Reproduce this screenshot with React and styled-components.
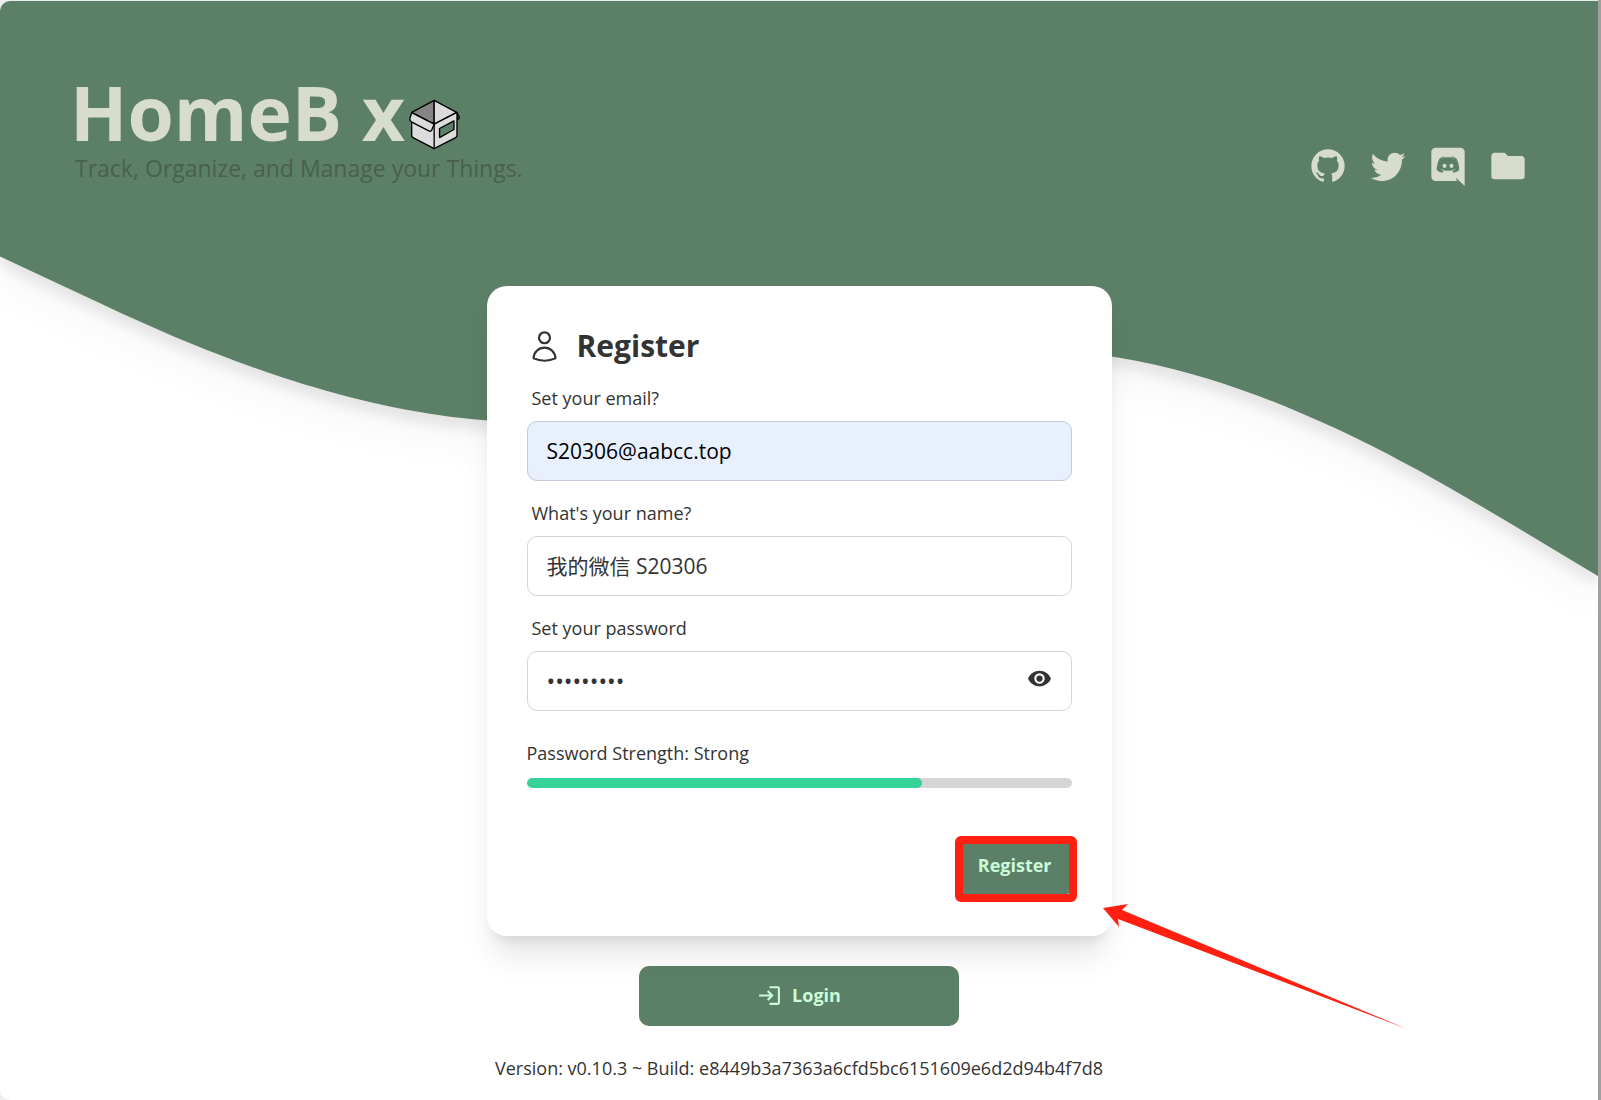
import React, { useState } from "react"
import styled, { createGlobalStyle, ThemeProvider } from "styled-components"

const theme = {
  colors: {
    primary: "#5c7f67",
    primaryContent: "#c9fbd9",
    banner: "#d8dccd",
    tagline: "#495f51",
    text: "#333333",
    border: "#d5d5d5",
    autofill: "#e8f0fe",
    success: "#36d399",
    alert: "#ff2011",
  },
}

const GlobalStyle = createGlobalStyle`
  * {
    box-sizing: border-box;
  }
  body {
    margin: 0;
    background-color: #eceeed;
    color: ${theme.colors.text};
    font-family: "Open Sans", "Noto Sans CJK SC", sans-serif;
    font-size: 18px;
    line-height: 24px;
  }
  h1, h2, p {
    margin: 0;
  }
`

const icons = {
  github:
    "M12,2A10,10 0 0,0 2,12C2,16.42 4.87,20.17 8.84,21.5C9.34,21.58 9.5,21.27 9.5,21C9.5,20.77 9.5,20.14 9.5,19.31C6.73,19.91 6.14,17.97 6.14,17.97C5.68,16.81 5.03,16.5 5.03,16.5C4.12,15.88 5.1,15.9 5.1,15.9C6.1,15.97 6.63,16.93 6.63,16.93C7.5,18.45 8.97,18 9.54,17.76C9.63,17.11 9.89,16.67 10.17,16.42C7.95,16.17 5.62,15.31 5.62,11.5C5.62,10.39 6,9.5 6.65,8.79C6.55,8.54 6.2,7.5 6.75,6.15C6.75,6.15 7.59,5.88 9.5,7.17C10.29,6.95 11.15,6.84 12,6.84C12.85,6.84 13.71,6.95 14.5,7.17C16.41,5.88 17.25,6.15 17.25,6.15C17.8,7.5 17.45,8.54 17.35,8.79C18,9.5 18.38,10.39 18.38,11.5C18.38,15.32 16.04,16.16 13.81,16.41C14.17,16.72 14.5,17.33 14.5,18.26C14.5,19.6 14.5,20.68 14.5,21C14.5,21.27 14.66,21.59 15.17,21.5C19.14,20.16 22,16.42 22,12A10,10 0 0,0 12,2Z",
  twitter:
    "M22.46,6C21.69,6.35 20.86,6.58 20,6.69C20.88,6.16 21.56,5.32 21.88,4.31C21.05,4.81 20.13,5.16 19.16,5.36C18.37,4.5 17.26,4 16,4C13.65,4 11.73,5.92 11.73,8.29C11.73,8.63 11.77,8.96 11.84,9.27C8.28,9.09 5.11,7.38 3,4.79C2.63,5.42 2.42,6.16 2.42,6.94C2.42,8.43 3.17,9.75 4.33,10.5C3.62,10.5 2.96,10.3 2.38,10C2.38,10 2.38,10 2.38,10.03C2.38,12.11 3.86,13.85 5.82,14.24C5.46,14.34 5.08,14.39 4.69,14.39C4.42,14.39 4.15,14.36 3.89,14.31C4.43,16 6,17.26 7.89,17.29C6.43,18.45 4.58,19.13 2.56,19.13C2.22,19.13 1.88,19.11 1.54,19.07C3.44,20.29 5.7,21 8.12,21C16,21 20.33,14.46 20.33,8.79C20.33,8.6 20.33,8.42 20.32,8.23C21.16,7.63 21.88,6.87 22.46,6Z",
  discord:
    "M22 24L16.75 19L17.38 21H4.5A2.5 2.5 0 0 1 2 18.5V3.5A2.5 2.5 0 0 1 4.5 1H19.5A2.5 2.5 0 0 1 22 3.5V24M12 6.8C9.32 6.8 7.44 7.95 7.44 7.95C8.47 7.03 10.27 6.5 10.27 6.5L10.1 6.33C8.41 6.36 6.88 7.53 6.88 7.53C5.16 11.12 5.27 14.22 5.27 14.22C6.67 16.03 8.75 15.9 8.75 15.9L9.46 15C8.21 14.73 7.42 13.62 7.42 13.62C7.42 13.62 9.3 14.9 12 14.9C14.7 14.9 16.58 13.62 16.58 13.62C16.58 13.62 15.79 14.73 14.54 15L15.25 15.9C15.25 15.9 17.33 16.03 18.73 14.22C18.73 14.22 18.84 11.12 17.12 7.53C17.12 7.53 15.59 6.36 13.9 6.33L13.73 6.5C13.73 6.5 15.53 7.03 16.56 7.95C16.56 7.95 14.68 6.8 12 6.8M9.93 10.59C10.58 10.59 11.11 11.16 11.1 11.86C11.1 12.55 10.58 13.13 9.93 13.13C9.29 13.13 8.77 12.55 8.77 11.86C8.77 11.16 9.28 10.59 9.93 10.59M14.1 10.59C14.75 10.59 15.27 11.16 15.27 11.86C15.27 12.55 14.75 13.13 14.1 13.13C13.46 13.13 12.94 12.55 12.94 11.86C12.94 11.16 13.45 10.59 14.1 10.59Z",
  folder:
    "M10,4H4C2.89,4 2,4.89 2,6V18A2,2 0 0,0 4,20H20A2,2 0 0,0 22,18V8C22,6.89 21.1,6 20,6H12L10,4Z",
  eye:
    "M12,9A3,3 0 0,0 9,12A3,3 0 0,0 12,15A3,3 0 0,0 15,12A3,3 0 0,0 12,9M12,17A5,5 0 0,1 7,12A5,5 0 0,1 12,7A5,5 0 0,1 17,12A5,5 0 0,1 12,17M12,4.5C7,4.5 2.73,7.61 1,12C2.73,16.39 7,19.5 12,19.5C17,19.5 21.27,16.39 23,12C21.27,7.61 17,4.5 12,4.5Z",
  login:
    "M11 7L9.6 8.4L12.2 11H2V13H12.2L9.6 15.6L11 17L16 12L11 7M20 19H12V21H20C21.1 21 22 20.1 22 19V5C22 3.9 21.1 3 20 3H12V5H20V19Z",
}

const Svg = styled.svg`
  display: block;
  flex: none;
  width: ${props => props.$size}px;
  height: ${props => props.$size}px;
`

const Icon = ({ name, size }) => (
  <Svg $size={size} viewBox="0 0 24 24" fill="currentColor" aria-hidden="true">
    <path d={icons[name]} />
  </Svg>
)

const Window = styled.div`
  min-height: 100vh;
  padding-top: 1px;
  border-right: 3px solid #a0a0a0;
`

const Page = styled.div`
  display: grid;
  grid-template-columns: minmax(0, 1fr);
  min-height: calc(100vh - 1px);
  border-radius: 10px 0 0 10px;
  background-color: #ffffff;
  overflow: hidden;
`

// shares the only grid cell with Content, so it sits behind it
const Backdrop = styled.div`
  grid-area: 1 / 1;
  filter: drop-shadow(0 25px 16px rgba(0, 0, 0, 0.03))
    drop-shadow(0 10px 6px rgba(0, 0, 0, 0.08));

  &::before {
    content: "";
    display: block;
    height: 221px;
    margin-bottom: -1px;
    background-color: ${props => props.theme.colors.primary};
  }
  svg {
    display: block;
    width: 100%;
    fill: ${props => props.theme.colors.primary};
  }
`

const Content = styled.div`
  grid-area: 1 / 1;
  position: relative;
  display: flex;
  flex-direction: column;
`

const Header = styled.header`
  display: flex;
  justify-content: space-between;
  align-items: flex-end;
  padding: 71px 70px 100px;
  color: ${props => props.theme.colors.banner};
`

const Title = styled.h1`
  display: flex;
  align-items: flex-end;
  gap: 4px;
  font-size: 75px;
  font-weight: 700;
  line-height: 80px;

  svg {
    margin-bottom: 2px;
  }
`

const Tagline = styled.p`
  padding: 0 0 2px 5px;
  color: ${props => props.theme.colors.tagline};
  font-size: 23px;
  line-height: 32px;
`

const SocialNav = styled.nav`
  display: flex;
  gap: 20px;

  a {
    color: inherit;
  }
`

const Main = styled.main`
  display: flex;
  flex-direction: column;
  align-items: center;
  gap: 30px;
`

const Card = styled.form`
  position: relative;
  width: 100%;
  max-width: 625px;
  padding: 40px;
  border-radius: 20px;
  background-color: #ffffff;
  box-shadow: 0 25px 31px -6px rgba(0, 0, 0, 0.1),
    0 10px 12px -7px rgba(0, 0, 0, 0.1);
`

const CardTitle = styled.h2`
  display: flex;
  align-items: center;
  gap: 15px;
  font-size: 30px;
  line-height: 40px;
`

const Field = styled.div`
  label {
    display: block;
    padding: 20px 5px 11px;
  }
`

const InputBox = styled.div`
  display: flex;
  align-items: center;
  height: 60px;
  padding: 0 19px;
  border: 1px solid
    ${props => (props.$filled ? "#c3cada" : props.theme.colors.border)};
  border-radius: 10px;
  background-color: ${props =>
    props.$filled ? props.theme.colors.autofill : "#ffffff"};
  color: ${props => (props.$filled ? "#000000" : "inherit")};

  input {
    flex: 1;
    min-width: 0;
    padding: 0;
    border: 0;
    outline: 0;
    background: none;
    color: inherit;
    font-family: inherit;
    font-size: 21px;
    line-height: 28px;
  }
  input[type="password"] {
    font-size: 23px;
  }
  button {
    padding: 0 0 6px;
    border: 0;
    background: none;
    color: inherit;
  }
`

const Strength = styled.div`
  display: grid;
  gap: 13px;
  padding: 30px 0 48px;
`

const Track = styled.div`
  height: 10px;
  border-radius: 5px;
  background-color: ${props => props.theme.colors.border};
  overflow: hidden;
`

const Bar = styled.div`
  height: 100%;
  border-radius: 5px;
  background-color: ${props => props.theme.colors.success};
`

const Button = styled.button`
  display: flex;
  align-items: center;
  justify-content: center;
  gap: 10px;
  width: ${props => (props.$wide ? "320px" : "auto")};
  height: 60px;
  padding: 0 20px 2px;
  border: 0;
  border-radius: 10px;
  background-color: ${props => props.theme.colors.primary};
  color: ${props => props.theme.colors.primaryContent};
  font: inherit;
  font-weight: 700;
`

const Actions = styled.div`
  display: flex;
  justify-content: flex-end;
`

const Marked = styled.div`
  position: relative;

  &::after {
    content: "";
    position: absolute;
    inset: 0 -5px -6px -3px;
    border: 8px solid ${props => props.theme.colors.alert};
    border-radius: 6px;
    pointer-events: none;
  }
`

const Arrow = styled.svg`
  position: absolute;
  top: 614px;
  left: 613px;
  width: 310px;
  height: 130px;
  fill: ${props => props.theme.colors.alert};
  pointer-events: none;
  z-index: 1;
`

const Footer = styled.footer`
  padding: 30px 0 20px;
  text-align: center;
`

const links = [
  { icon: "github", label: "GitHub" },
  { icon: "twitter", label: "Twitter" },
  { icon: "discord", label: "Discord" },
  { icon: "folder", label: "Docs" },
]

const BoxLogo = () => (
  <Svg
    $size={51}
    viewBox="54 38 152 150"
    stroke="#000000"
    strokeWidth="4"
    strokeLinejoin="round"
    strokeLinecap="round"
    aria-hidden="true"
  >
    <path d="M196 77L203 89Q205 95 200 98L196 94Z" fill="#6f6f6f" />
    <path d="M129 41L62 77L129 112Z" fill="#858585" />
    <path d="M129 41L196 77L129 112Z" fill="#dcdcdc" />
    <path
      d="M62 78V146Q62 150 66 152L129 185L193 152Q197 150 197 146V77L129 112ZM145 125V152L188 128V102Z"
      fill="#dcdcdc"
      fillRule="evenodd"
    />
    <path d="M129 112V185" />
    <path
      d="M62 78L129 112L122 129Q119 135 113 132L61 105Q55 101 57 94Z"
      fill="#dcdcdc"
    />
  </Svg>
)

const App = () => {
  const [email, setEmail] = useState("S20306@aabcc.top")
  const [name, setName] = useState("我的微信 S20306")
  const [password, setPassword] = useState("homebox10")
  const [visible, setVisible] = useState(false)
  const score = 72.5

  return (
    <ThemeProvider theme={theme}>
      <GlobalStyle />
      <Window>
        <Page>
          <Backdrop>
            <svg viewBox="0 0 1440 320" aria-hidden="true">
              <path d="M0,32L80,69.3C160,107,320,181,480,181.3C640,181,800,107,960,117.3C1120,128,1280,224,1360,272L1440,320L1440,0L0,0Z" />
            </svg>
          </Backdrop>
          <Content>
            <Header>
              <div>
                <Title>
                  HomeB x
                  <BoxLogo />
                </Title>
                <Tagline>Track, Organize, and Manage your Things.</Tagline>
              </div>
              <SocialNav>
                {links.map(({ icon, label }) => (
                  <a key={icon} href={`#${icon}`} aria-label={label}>
                    <Icon name={icon} size={40} />
                  </a>
                ))}
              </SocialNav>
            </Header>
            <Main>
              <Card onSubmit={e => e.preventDefault()}>
                <CardTitle>
                  <Svg
                    $size={35}
                    viewBox="0 0 24 24"
                    fill="none"
                    stroke="currentColor"
                    strokeWidth="1.5"
                    strokeLinecap="round"
                    strokeLinejoin="round"
                    aria-hidden="true"
                  >
                    <path d="M15.75 6a3.75 3.75 0 1 1-7.5 0a3.75 3.75 0 0 1 7.5 0ZM4.501 20.118a7.5 7.5 0 0 1 14.998 0A17.933 17.933 0 0 1 12 21.75c-2.676 0-5.216-.584-7.499-1.632Z" />
                  </Svg>
                  Register
                </CardTitle>
                <Field>
                  <label htmlFor="email">Set your email?</label>
                  <InputBox $filled>
                    <input
                      id="email"
                      type="text"
                      value={email}
                      onChange={e => setEmail(e.target.value)}
                    />
                  </InputBox>
                </Field>
                <Field>
                  <label htmlFor="name">What's your name?</label>
                  <InputBox>
                    <input
                      id="name"
                      type="text"
                      value={name}
                      onChange={e => setName(e.target.value)}
                    />
                  </InputBox>
                </Field>
                <Field>
                  <label htmlFor="password">Set your password</label>
                  <InputBox>
                    <input
                      id="password"
                      type={visible ? "text" : "password"}
                      value={password}
                      onChange={e => setPassword(e.target.value)}
                    />
                    <button
                      type="button"
                      aria-label="Toggle password"
                      onClick={() => setVisible(!visible)}
                    >
                      <Icon name="eye" size={25} />
                    </button>
                  </InputBox>
                </Field>
                <Strength>
                  <p>Password Strength: Strong</p>
                  <Track>
                    <Bar style={{ width: `${score}%` }} />
                  </Track>
                </Strength>
                <Actions>
                  <Marked>
                    <Button type="submit">Register</Button>
                  </Marked>
                </Actions>
                <Arrow viewBox="0 0 310 130" aria-hidden="true">
                  <path d="M3 8L28 4L22 10L307 129L18 19L19 27Z" />
                </Arrow>
              </Card>
              <Button type="button" $wide>
                <Icon name="login" size={25} />
                Login
              </Button>
            </Main>
            <Footer>
              Version: v0.10.3 ~ Build: e8449b3a7363a6cfd5bc6151609e6d2d94b4f7d8
            </Footer>
          </Content>
        </Page>
      </Window>
    </ThemeProvider>
  )
}

export default App
